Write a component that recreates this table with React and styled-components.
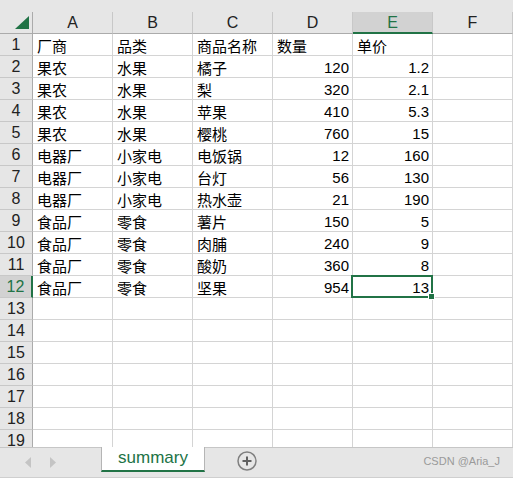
import React from "react";
import styled, { createGlobalStyle } from "styled-components";

const Global = createGlobalStyle`
  html, body { margin: 0; padding: 0; background: #fff; overflow: hidden; }
  body { font-family: "Liberation Sans", Arial, sans-serif; }
`;

const Page = styled.div`
  width: 513px;
  height: 478px;
  display: flex;
  flex-direction: column;
  background: #e6e6e6;
`;

const TopStrip = styled.div`
  height: 12px;
  flex: none;
  background: #e6e6e6;
`;

const Grid = styled.div`
  position: relative;
  flex: none;
  height: 435px;
  overflow: hidden;
  background: #fff;
  display: grid;
  grid-template-columns: 33px repeat(6, 80px);
  grid-auto-rows: 22px;
`;

const Corner = styled.div`
  position: relative;
  background: #e6e6e6;
  border-right: 1px solid #ababab;
  border-bottom: 1px solid #ababab;
  box-sizing: border-box;
  svg { position: absolute; left: 15px; top: 4px; }
`;

const ColHead = styled.div`
  box-sizing: border-box;
  background: ${(p) => (p.$active ? "#d2d2d2" : "#e6e6e6")};
  border-right: 1px solid #c8c8c8;
  border-bottom: ${(p) => (p.$active ? "2px solid #217346" : "1px solid #ababab")};
  display: flex;
  align-items: center;
  justify-content: center;
  font-size: 16px;
  color: ${(p) => (p.$active ? "#217346" : "#222")};
  padding-top: ${(p) => (p.$active ? "1px" : "0")};
`;

const RowHead = styled.div`
  box-sizing: border-box;
  background: ${(p) => (p.$active ? "#d2d2d2" : "#e6e6e6")};
  border-right: ${(p) => (p.$active ? "2px solid #217346" : "1px solid #ababab")};
  border-bottom: 1px solid #c8c8c8;
  display: flex;
  align-items: center;
  justify-content: center;
  font-size: 16px;
  line-height: 1;
  padding-top: 1px;
  color: ${(p) => (p.$active ? "#217346" : "#222")};
`;

const Cell = styled.div`
  box-sizing: border-box;
  border-right: 1px solid #d4d4d4;
  border-bottom: 1px solid #d4d4d4;
  display: flex;
  align-items: center;
  justify-content: ${(p) => (p.$num ? "flex-end" : "flex-start")};
  padding: 2px 3px 0 4px;
  font-size: 15px;
  line-height: 1;
  color: #000;
  white-space: nowrap;
  overflow: visible;
  font-family: ${(p) =>
    p.$num
      ? `"Liberation Sans", Arial, sans-serif`
      : `"Noto Sans CJK SC", "Liberation Sans", sans-serif`};
`;

const Selection = styled.div`
  position: absolute;
  left: 351px;
  top: 263px;
  width: 82px;
  height: 23px;
  box-sizing: border-box;
  border: 2px solid #217346;
  pointer-events: none;
`;

const Handle = styled.div`
  position: absolute;
  left: 428px;
  top: 281px;
  width: 7px;
  height: 7px;
  box-sizing: border-box;
  background: #217346;
  border: 1px solid #fff;
`;

const TabBar = styled.div`
  flex: 1;
  display: flex;
  align-items: stretch;
  background: #e6e6e6;
  border-top: 1px solid #c6c6c6;
  border-bottom: 1px solid #cfcfcf;
  box-sizing: border-box;
  position: relative;
`;

const NavArrows = styled.div`
  width: 101px;
  display: flex;
  align-items: center;
  padding-left: 25px;
  gap: 17px;
  box-sizing: border-box;
`;

const Tab = styled.div`
  width: 104px;
  margin-top: -1px;
  background: #fff;
  border-left: 1px solid #b5b5b5;
  border-right: 1px solid #b5b5b5;
  border-bottom: 2px solid #217346;
  box-sizing: border-box;
  height: 25px;
  display: flex;
  align-items: center;
  justify-content: center;
  color: #217346;
  font-size: 17px;
  padding-bottom: 2px;
`;

const AddButton = styled.div`
  margin-left: 32px;
  display: flex;
  align-items: center;
  height: 25px;
`;

const Watermark = styled.div`
  margin-left: auto;
  margin-right: 13px;
  display: flex;
  align-items: center;
  height: 25px;
  font-size: 11px;
  color: #9a9a9a;
`;

const cols = ["A", "B", "C", "D", "E", "F"];
const data = [
  ["厂商", "品类", "商品名称", "数量", "单价"],
  ["果农", "水果", "橘子", 120, 1.2],
  ["果农", "水果", "梨", 320, 2.1],
  ["果农", "水果", "苹果", 410, 5.3],
  ["果农", "水果", "樱桃", 760, 15],
  ["电器厂", "小家电", "电饭锅", 12, 160],
  ["电器厂", "小家电", "台灯", 56, 130],
  ["电器厂", "小家电", "热水壶", 21, 190],
  ["食品厂", "零食", "薯片", 150, 5],
  ["食品厂", "零食", "肉脯", 240, 9],
  ["食品厂", "零食", "酸奶", 360, 8],
  ["食品厂", "零食", "坚果", 954, 13],
];

export default function App() {
  const rows = [];
  for (let r = 1; r <= 19; r++) {
    const rowData = data[r - 1] || [];
    rows.push(
      <RowHead key={`h${r}`} $active={r === 12}>
        {r}
      </RowHead>
    );
    for (let c = 0; c < 6; c++) {
      const v = rowData[c];
      const num = typeof v === "number";
      rows.push(
        <Cell key={`${r}-${c}`} $num={num}>
          {v !== undefined ? String(v) : ""}
        </Cell>
      );
    }
  }
  return (
    <>
      <Global />
      <Page>
        <TopStrip />
        <Grid>
          <Corner>
            <svg width="15" height="14" viewBox="0 0 15 14">
              <polygon points="14,0 14,13 0,13" fill="#217346" />
            </svg>
          </Corner>
          {cols.map((c) => (
            <ColHead key={c} $active={c === "E"}>
              {c}
            </ColHead>
          ))}
          {rows}
          <Selection />
          <Handle />
        </Grid>
        <TabBar>
          <NavArrows>
            <svg width="7" height="11" viewBox="0 0 7 11">
              <polygon points="6,0 6,11 0,5.5" fill="#c4c4c4" />
            </svg>
            <svg width="7" height="11" viewBox="0 0 7 11">
              <polygon points="1,0 1,11 7,5.5" fill="#c4c4c4" />
            </svg>
          </NavArrows>
          <Tab>summary</Tab>
          <AddButton>
            <svg width="20" height="20" viewBox="0 0 20 20">
              <circle cx="10" cy="10" r="9" fill="none" stroke="#808080" strokeWidth="1.5" />
              <path d="M10 5.5v9M5.5 10h9" stroke="#606060" strokeWidth="2" />
            </svg>
          </AddButton>
          <Watermark>CSDN @Aria_J</Watermark>
        </TabBar>
      </Page>
    </>
  );
}
